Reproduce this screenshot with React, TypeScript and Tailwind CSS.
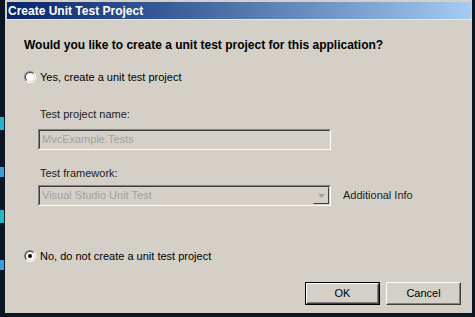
import React from "react";

const font = { fontFamily: '"Liberation Sans", Arial, sans-serif' };

const Radio = ({ checked }: { checked?: boolean }) => (
  <span className="relative inline-block h-[12px] w-[12px] shrink-0 rounded-full border border-t-[#808080] border-l-[#808080] border-r-white border-b-white bg-white">
    <span className="absolute inset-0 rounded-full border border-t-[#404040] border-l-[#404040] border-r-[#d4d0c8] border-b-[#d4d0c8]" />
    {checked && (
      <span className="absolute left-[3px] top-[3px] h-[4px] w-[4px] rounded-full bg-black" />
    )}
  </span>
);

const Sunken = ({ children }: { children: React.ReactNode }) => (
  <div className="flex h-[21px] w-[293px] items-center border border-t-[#808080] border-l-[#808080] border-r-white border-b-white">
    <div className="flex h-full w-full items-center border border-t-[#404040] border-l-[#404040] border-r-[#d4d0c8] border-b-[#d4d0c8]">
      {children}
    </div>
  </div>
);

const Button = ({ label, focused }: { label: string; focused?: boolean }) => (
  <div
    className={
      "flex h-[23px] w-[75px] items-center justify-center text-[11px] text-black " +
      (focused ? "border border-black" : "")
    }
  >
    <div className="flex h-full w-full items-center justify-center border border-t-white border-l-white border-r-[#404040] border-b-[#404040]">
      <div className="flex h-full w-full items-center justify-center border border-t-[#d4d0c8] border-l-[#d4d0c8] border-r-[#808080] border-b-[#808080]">
        {label}
      </div>
    </div>
  </div>
);

export default function App() {
  return (
    <div className="flex h-[317px] w-[475px] overflow-hidden bg-[#0c1524]" style={font}>
      <div className="flex w-[5px] shrink-0 flex-col">
        <div className="h-[117px]" />
        <div className="h-[13px] w-[4px] bg-[#1fb7c9]" />
        <div className="h-[37px]" />
        <div className="h-[10px] w-[4px] bg-[#3a9fd8]" />
        <div className="h-[33px]" />
        <div className="h-[13px] w-[4px] bg-[#22b8c4]" />
        <div className="h-[37px]" />
        <div className="h-[10px] w-[4px] bg-[#3a9fd8]" />
      </div>
      <div className="flex h-[313px] w-[467px] flex-col border-l border-l-[#d4d0c8] bg-[#d4d0c8]">
        <div className="mx-[1px] mt-[2px] flex h-[17px] items-center bg-gradient-to-r from-[#0a246a] to-[#a6caf0] pl-[1px]">
          <span className="text-[12px] font-bold text-white">Create Unit Test Project</span>
        </div>
        <div className="flex flex-1 flex-col border-t border-t-[#e8e6e0] pl-[18px] text-[11px] text-black">
          <div className="mt-[18px] h-[14px] text-[12px] font-bold leading-[14px]">
            Would you like to create a unit test project for this application?
          </div>
          <div className="mt-[18px] flex h-[14px] items-center gap-[4px]">
            <Radio />
            <span>Yes, create a unit test project</span>
          </div>
          <div className="ml-[16px] mt-[23px] h-[14px] leading-[14px] text-[#222]">Test project name:</div>
          <div className="ml-[14px] mt-[8px]">
            <Sunken>
              <span className="pl-[2px] text-[#a0a0a0]">MvcExample.Tests</span>
            </Sunken>
          </div>
          <div className="ml-[16px] mt-[16px] h-[14px] leading-[14px] text-[#222]">Test framework:</div>
          <div className="ml-[14px] mt-[5px] flex items-center">
            <Sunken>
              <span className="flex-1 pl-[2px] text-[#a0a0a0]">Visual Studio Unit Test</span>
              <div className="flex h-[17px] w-[16px] items-center justify-center border border-t-[#d4d0c8] border-l-[#d4d0c8] border-r-[#404040] border-b-[#404040] bg-[#d4d0c8]">
                <svg width="7" height="4" viewBox="0 0 7 4">
                  <path d="M0 0h7L3.5 4z" fill="#a0a0a0" />
                </svg>
              </div>
            </Sunken>
            <span className="ml-[12px] text-[#222]">Additional Info</span>
          </div>
          <div className="mt-[43px] flex h-[14px] items-center gap-[4px]">
            <Radio checked />
            <span>No, do not create a unit test project</span>
          </div>
          <div className="mt-[19px] flex justify-end gap-[6px] pr-[11px]">
            <Button label="OK" focused />
            <Button label="Cancel" />
          </div>
        </div>
      </div>
      <div className="w-[3px] shrink-0" />
    </div>
  );
}
